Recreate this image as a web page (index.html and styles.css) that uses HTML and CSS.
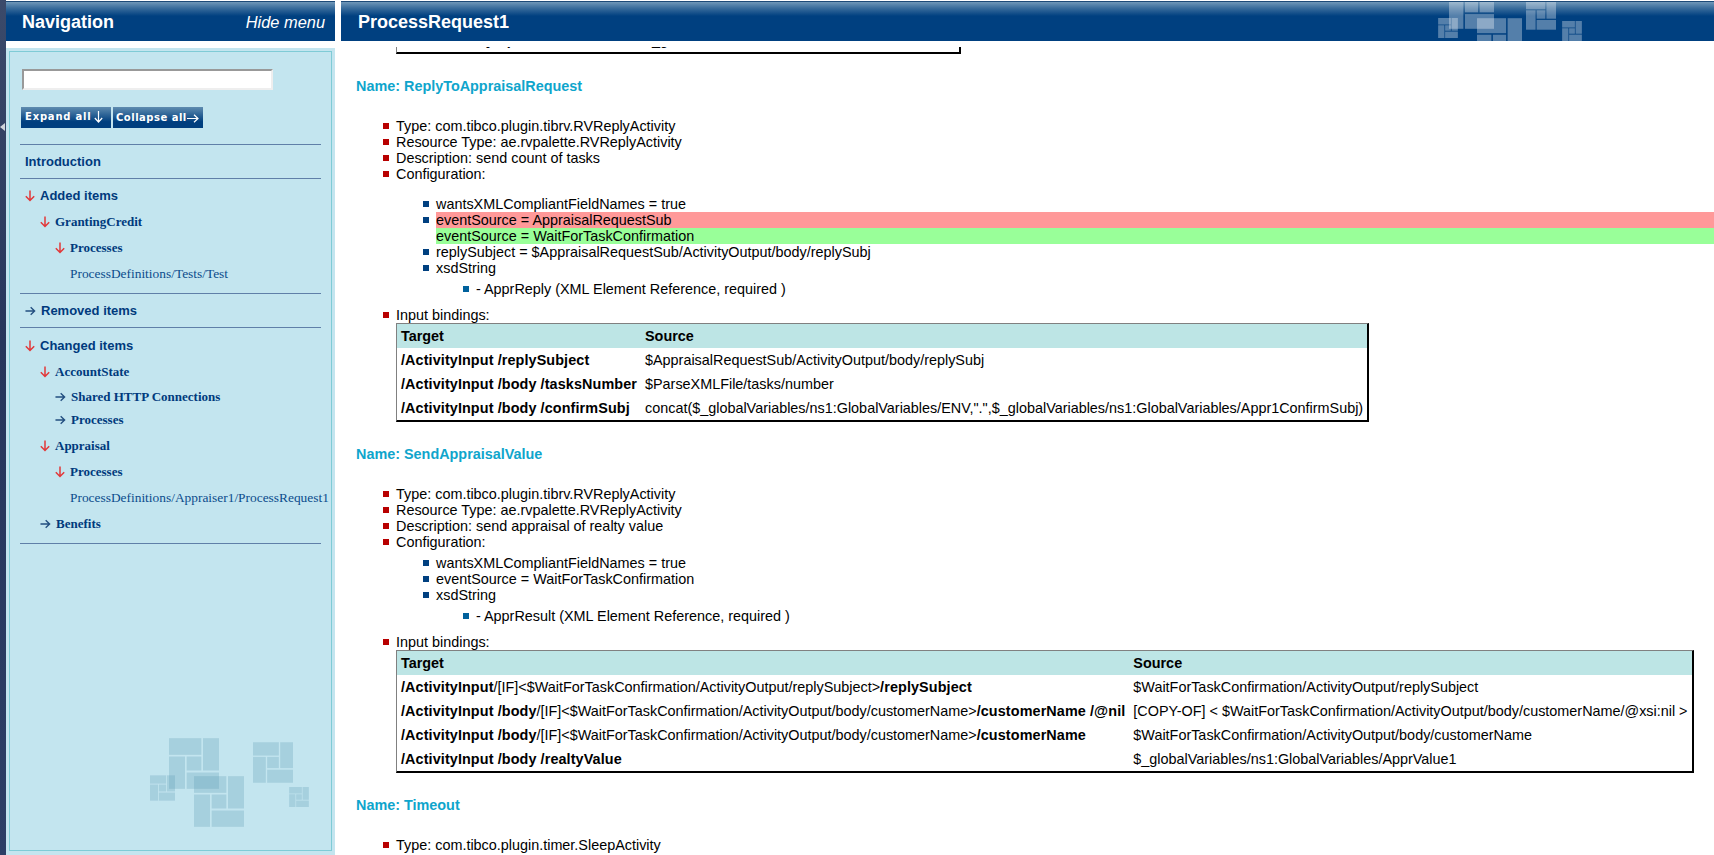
FILE: index.html
```html
<!DOCTYPE html>
<html lang="en">
<head>
  <title>ProcessRequest1</title>
  <meta charset="utf-8">
  <link rel="stylesheet" href="styles.css">
</head>
<body>
  <svg class="defs" width="0" height="0">
    <defs>
      <symbol id="tile" viewBox="0 0 150 152">
        <rect x="0" y="0" width="97" height="50"/>
        <rect x="102" y="0" width="48" height="97"/>
        <rect x="0" y="55" width="48" height="97"/>
        <rect x="53" y="55" width="44" height="42"/>
        <rect x="53" y="103" width="97" height="49"/>
      </symbol>
      <symbol id="down" viewBox="0 0 10 12">
        <path d="M5 0.5V10.5M0.8 6.2L5 10.5L9.2 6.2" fill="none" stroke="#e2383a" stroke-width="1.5"/>
      </symbol>
      <symbol id="right" viewBox="0 0 12 10">
        <path d="M0.5 5H10.5M6.2 0.8L10.5 5L6.2 9.2" fill="none" stroke="#234f80" stroke-width="1.5"/>
      </symbol>
      <symbol id="btn-down" viewBox="0 0 9 12">
        <path d="M4.5 0V11M0.8 7L4.5 11L8.2 7" fill="none" stroke="#fff" stroke-width="1.2"/>
      </symbol>
      <symbol id="btn-right" viewBox="0 0 12 9">
        <path d="M0 4.5H11M7 0.8L11 4.5L7 8.2" fill="none" stroke="#fff" stroke-width="1.2"/>
      </symbol>
    </defs>
  </svg>

  <div class="strip"><span class="strip-handle"></span></div>

  <div class="nav">
    <div class="bar nav-bar">
      <span class="bar-title">Navigation</span>
      <span class="hide-menu">Hide menu</span>
    </div>
    <div class="nav-panel">
      <div class="nav-inner">
        <input type="text" class="search">
        <div class="nav-buttons">
          <span class="nav-btn">Expand all<svg class="btn-ico-d"><use href="#btn-down"/></svg></span>
          <span class="nav-btn nav-btn-low">Collapse all<svg class="btn-ico-r"><use href="#btn-right"/></svg></span>
        </div>
        <div class="nav-section nav-intro">
          <div class="row sans">Introduction</div>
        </div>
        <div class="nav-section nav-first">
          <div class="row sans"><svg class="ico"><use href="#down"/></svg>Added items</div>
          <div class="row lvl1"><svg class="ico"><use href="#down"/></svg>GrantingCredit</div>
          <div class="row lvl2"><svg class="ico"><use href="#down"/></svg>Processes</div>
          <div class="row lvl3 leaf">ProcessDefinitions/Tests/Test</div>
        </div>
        <div class="nav-section nav-intro">
          <div class="row sans"><svg class="ico ico-r"><use href="#right"/></svg>Removed items</div>
        </div>
        <div class="nav-section nav-last">
          <div class="row sans"><svg class="ico"><use href="#down"/></svg>Changed items</div>
          <div class="row lvl1"><svg class="ico"><use href="#down"/></svg>AccountState</div>
          <div class="row lvl2 short"><svg class="ico ico-r"><use href="#right"/></svg>Shared HTTP Connections</div>
          <div class="row lvl2 short"><svg class="ico ico-r"><use href="#right"/></svg>Processes</div>
          <div class="row lvl1 after-short"><svg class="ico"><use href="#down"/></svg>Appraisal</div>
          <div class="row lvl2"><svg class="ico"><use href="#down"/></svg>Processes</div>
          <div class="row lvl3 leaf">ProcessDefinitions/Appraiser1/ProcessRequest1</div>
          <div class="row lvl1"><svg class="ico ico-r"><use href="#right"/></svg>Benefits</div>
        </div>
        <svg class="nav-mark" width="200" height="100">
          <use href="#tile" x="19" y="0" width="50" height="51"/>
          <use href="#tile" x="44" y="38" width="50" height="51"/>
          <use href="#tile" x="103" y="4" width="40" height="41"/>
          <use href="#tile" x="0" y="37" width="25" height="26"/>
          <use href="#tile" x="139" y="49" width="20" height="20"/>
        </svg>
      </div>
    </div>
  </div>

  <div class="main">
    <div class="bar main-bar">
      <span class="bar-title">ProcessRequest1</span>
      <svg class="bar-mark" width="300" height="40">
        <use href="#tile" x="108" y="-19" width="45" height="46"/>
        <use href="#tile" x="136" y="16" width="45" height="46"/>
        <use href="#tile" x="185" y="-3" width="30" height="31"/>
        <use href="#tile" x="97" y="16" width="20" height="20"/>
        <use href="#tile" x="221" y="19" width="20" height="20"/>
      </svg>
    </div>
    <div class="doc">
      <div class="cut-table">
        <table class="bind">
          <tr><td class="cut-target"><b>/ActivityInput</b></td><td>$_globalVariables/ns1:GlobalVariables/ENV</td></tr>
        </table>
      </div>

      <h3 class="name">Name: ReplyToAppraisalRequest</h3>
      <ul class="props">
        <li>Type: com.tibco.plugin.tibrv.RVReplyActivity</li>
        <li>Resource Type: ae.rvpalette.RVReplyActivity</li>
        <li>Description: send count of tasks</li>
        <li>Configuration:
          <ul class="config gap-big">
            <li>wantsXMLCompliantFieldNames = true</li>
            <li>
              <div class="removed">eventSource = AppraisalRequestSub</div>
              <div class="added">eventSource = WaitForTaskConfirmation</div>
            </li>
            <li>replySubject = $AppraisalRequestSub/ActivityOutput/body/replySubj</li>
            <li>xsdString
              <ul class="schema"><li>- ApprReply (XML Element Reference, required )</li></ul>
            </li>
          </ul>
        </li>
        <li class="bindings">Input bindings:
          <table class="bind">
            <tr class="head"><td>Target</td><td>Source</td></tr>
            <tr><td><b>/ActivityInput /replySubject</b></td><td>$AppraisalRequestSub/ActivityOutput/body/replySubj</td></tr>
            <tr><td><b>/ActivityInput /body /tasksNumber</b></td><td>$ParseXMLFile/tasks/number</td></tr>
            <tr><td><b>/ActivityInput /body /confirmSubj</b></td><td>concat($_globalVariables/ns1:GlobalVariables/ENV,".",$_globalVariables/ns1:GlobalVariables/Appr1ConfirmSubj)</td></tr>
          </table>
        </li>
      </ul>

      <h3 class="name">Name: SendAppraisalValue</h3>
      <ul class="props">
        <li>Type: com.tibco.plugin.tibrv.RVReplyActivity</li>
        <li>Resource Type: ae.rvpalette.RVReplyActivity</li>
        <li>Description: send appraisal of realty value</li>
        <li>Configuration:
          <ul class="config">
            <li>wantsXMLCompliantFieldNames = true</li>
            <li>eventSource = WaitForTaskConfirmation</li>
            <li>xsdString
              <ul class="schema"><li>- ApprResult (XML Element Reference, required )</li></ul>
            </li>
          </ul>
        </li>
        <li class="bindings">Input bindings:
          <table class="bind">
            <tr class="head"><td>Target</td><td>Source</td></tr>
            <tr><td><b>/ActivityInput</b>/[IF]&lt;$WaitForTaskConfirmation/ActivityOutput/replySubject&gt;<b>/replySubject</b></td><td>$WaitForTaskConfirmation/ActivityOutput/replySubject</td></tr>
            <tr><td><b>/ActivityInput /body</b>/[IF]&lt;$WaitForTaskConfirmation/ActivityOutput/body/customerName&gt;<b>/customerName /@nil</b></td><td>[COPY-OF] &lt; $WaitForTaskConfirmation/ActivityOutput/body/customerName/@xsi:nil &gt;</td></tr>
            <tr><td><b>/ActivityInput /body</b>/[IF]&lt;$WaitForTaskConfirmation/ActivityOutput/body/customerName&gt;<b>/customerName</b></td><td>$WaitForTaskConfirmation/ActivityOutput/body/customerName</td></tr>
            <tr><td><b>/ActivityInput /body /realtyValue</b></td><td>$_globalVariables/ns1:GlobalVariables/ApprValue1</td></tr>
          </table>
        </li>
      </ul>

      <h3 class="name">Name: Timeout</h3>
      <ul class="props">
        <li>Type: com.tibco.plugin.timer.SleepActivity</li>
      </ul>
    </div>
  </div>
</body>
</html>
```

FILE: styles.css
```css
html, body {
  margin: 0;
  height: 100%;
  overflow: hidden;
  background: #fff;
}
body {
  display: flex;
  font-family: "Liberation Sans", Arial, sans-serif;
  font-size: 14.4px;
  line-height: 16px;
  color: #000;
  padding-top: 1px;
  box-sizing: border-box;
}
.defs {
  position: absolute;
}

/* collapse strip on the far left */
.strip {
  width: 6px;
  flex: none;
  margin-top: -1px;
  background: linear-gradient(#3b4a6a, #26365c 40%, #2c3f66);
  position: relative;
}
.strip-handle {
  position: absolute;
  left: 0;
  top: 123px;
  border-style: solid;
  border-width: 4px 5px 4px 0;
  border-color: transparent #d0d4da transparent transparent;
}

/* header bars */
.bar {
  height: 40px;
  display: flex;
  align-items: center;
  justify-content: space-between;
  position: relative;
  overflow: hidden;
  flex: none;
  border-top: 1px solid #1c4a78;
  box-sizing: border-box;
  background: linear-gradient(#6f97b8 0, #3a6d9c 6px, #004080 14px);
  color: #fff;
}
.bar-title {
  font-size: 18px;
  font-weight: bold;
}

/* navigation */
.nav {
  width: 329px;
  flex: none;
  display: flex;
  flex-direction: column;
}
.nav-bar {
  padding: 0 10px 0 16px;
}
.hide-menu {
  font-style: italic;
  font-size: 16.4px;
}
.nav-panel {
  flex: 1;
  margin-top: 7px;
  padding: 3px 3px 4px;
  background: #c3e5ef;
  display: flex;
}
.nav-inner {
  flex: 1;
  min-width: 0;
  border: 1px solid #7fcbd6;
  padding: 17px 10px 0;
  position: relative;
}
.search {
  display: block;
  width: 251px;
  height: 21px;
  box-sizing: border-box;
  margin: 0 0 17px 2px;
  padding: 0;
  background: #fff;
  border: 2px solid;
  border-color: #999 #eee #eee #999;
}
.nav-buttons {
  display: flex;
  gap: 2px;
  margin: 0 0 16px 1px;
}
.nav-btn {
  width: 90px;
  height: 21px;
  box-sizing: border-box;
  padding: 0 0 1px 4px;
  display: flex;
  align-items: center;
  background: linear-gradient(#5f8cb0, #003f7f 70%);
  color: #fff;
  font-family: "DejaVu Sans", sans-serif;
  font-size: 10px;
  font-weight: bold;
  letter-spacing: 0.8px;
  white-space: nowrap;
}
.nav-btn-low {
  padding: 1px 0 0 3px;
  letter-spacing: 0.5px;
}
.btn-ico-d {
  width: 9px;
  height: 12px;
  margin-left: 2px;
  flex: none;
}
.btn-ico-r {
  width: 12px;
  height: 9px;
  flex: none;
}
.nav-section {
  border-top: 1px solid #5f7fa8;
  padding: 5px 0 6px;
}
.nav-intro {
  padding: 7px 0 6px;
}
.nav-first {
  padding: 4px 0 6px;
}
.nav-last {
  border-bottom: 1px solid #5f7fa8;
}
.row {
  height: 26px;
  display: flex;
  align-items: center;
  padding-left: 5px;
  font-family: "Liberation Serif", "Times New Roman", serif;
  font-size: 13px;
  font-weight: bold;
  color: #003a7d;
  white-space: nowrap;
}
.sans {
  font-family: "Liberation Sans", Arial, sans-serif;
}
.nav-intro .row {
  height: 20px;
}
.lvl1 {
  padding-left: 20px;
}
.lvl2 {
  padding-left: 35px;
}
.lvl3 {
  padding-left: 50px;
}
.short {
  height: 23px;
}
.after-short {
  margin-top: 2px;
}
.leaf {
  font-weight: normal;
  font-size: 13.4px;
  color: #0b4c8c;
}
.ico {
  width: 10px;
  height: 12px;
  margin-right: 5px;
  flex: none;
}
.ico-r {
  width: 11px;
  height: 10px;
}
.nav-mark {
  position: absolute;
  left: 140px;
  top: 686px;
  fill: #5f9ab5;
  fill-opacity: 0.28;
}

/* main column */
.main {
  flex: 1;
  min-width: 0;
  margin-left: 6px;
  display: flex;
  flex-direction: column;
  overflow: hidden;
}
.main-bar {
  padding-left: 17px;
}
.bar-mark {
  position: absolute;
  left: 1000px;
  top: 0;
  overflow: visible;
  fill: #fff;
  fill-opacity: 0.33;
}
.doc {
  flex: 1;
  overflow: hidden;
  padding-top: 6px;
}
.cut-table {
  margin-left: 55px;
  height: 7px;
  overflow: hidden;
  position: relative;
}
.cut-table .bind {
  position: absolute;
  left: 0;
  bottom: 0;
  width: 565px;
  table-layout: fixed;
}
.name {
  margin: 24px 0 24px 15px;
  font-size: 14.4px;
  line-height: 16px;
  color: #0fa5cc;
}
ul {
  list-style: none;
  margin: 0;
  padding: 0;
}
.props {
  padding-left: 55px;
}
li {
  position: relative;
}
li::before {
  content: "";
  position: absolute;
  width: 6px;
  height: 6px;
  left: -13px;
  top: 5px;
  background: #b80000;
}
.config {
  margin-top: 5px;
  padding-left: 40px;
}
.config.gap-big {
  margin-top: 14px;
}
.config li::before {
  background: #004080;
}
.schema {
  margin-top: 5px;
  padding-left: 40px;
}
.schema li::before {
  background: #00619c;
}
.removed {
  background: #ff9999;
}
.added {
  background: #99ff99;
}
.bindings {
  margin-top: 10px;
}
.bind {
  border-collapse: separate;
  border-spacing: 0;
  border-style: solid;
  border-width: 1px 2px 2px 1px;
  border-color: #808080 #000 #000 #808080;
  white-space: nowrap;
}
.bind td {
  padding: 4px;
}
.bind b {
  letter-spacing: 0.1px;
}
.bind .cut-target {
  padding-left: 40px;
  width: 199px;
}
.head td {
  background: #bde5e5;
  font-weight: bold;
}
```
